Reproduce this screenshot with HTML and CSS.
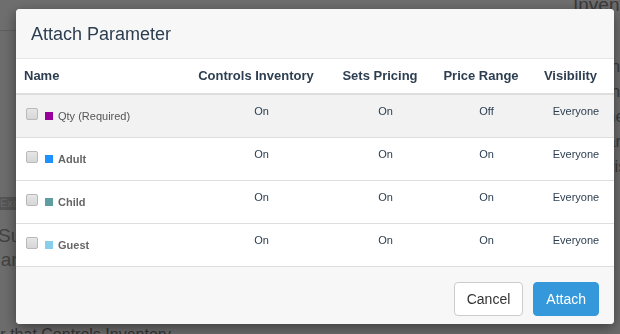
FILE: index.html
```html
<!DOCTYPE html>
<html lang="en">
<head>
<meta charset="utf-8">
<title>Attach Parameter</title>
<link rel="stylesheet" href="styles.css">
</head>
<body>
<div class="page">
  <main class="page-main">
    <div class="topbar"></div>
    <div class="content">
      <span class="badge">Example</span>
      <p class="lead">Sustainable tours</p>
      <p class="lead2">Parameters</p>
      <p class="note">Parameter that Controls Inventory.</p>
    </div>
  </main>
  <aside class="page-side">
    <h3 class="side-title">Inventory</h3>
    <p class="side-text">Inventory is controlled by the parameter selected here. Other parameters are tied to pricing and visibility for everyone.</p>
  </aside>
</div>

<div class="backdrop"></div>

<div class="modal-wrap">
  <div class="modal">
    <div class="modal-header">
      <h4 class="modal-title">Attach Parameter</h4>
    </div>
    <table class="ptable">
      <colgroup>
        <col class="c-name">
        <col class="c-inv">
        <col class="c-pri">
        <col class="c-rng">
        <col class="c-vis">
      </colgroup>
      <thead>
        <tr>
          <th class="th-name">Name</th>
          <th>Controls Inventory</th>
          <th>Sets Pricing</th>
          <th>Price Range</th>
          <th>Visibility</th>
        </tr>
      </thead>
      <tbody>
        <tr class="striped">
          <td class="name"><span class="cell-name"><span class="check"></span><span class="swatch sw-qty"></span><span class="label-req">Qty (Required)</span></span></td>
          <td class="val">On</td>
          <td class="val">On</td>
          <td class="val">Off</td>
          <td class="val">Everyone</td>
        </tr>
        <tr>
          <td class="name"><span class="cell-name"><span class="check"></span><span class="swatch sw-adult"></span><span class="label">Adult</span></span></td>
          <td class="val">On</td>
          <td class="val">On</td>
          <td class="val">On</td>
          <td class="val">Everyone</td>
        </tr>
        <tr>
          <td class="name"><span class="cell-name"><span class="check"></span><span class="swatch sw-child"></span><span class="label">Child</span></span></td>
          <td class="val">On</td>
          <td class="val">On</td>
          <td class="val">On</td>
          <td class="val">Everyone</td>
        </tr>
        <tr>
          <td class="name"><span class="cell-name"><span class="check"></span><span class="swatch sw-guest"></span><span class="label">Guest</span></span></td>
          <td class="val">On</td>
          <td class="val">On</td>
          <td class="val">On</td>
          <td class="val">Everyone</td>
        </tr>
      </tbody>
    </table>
    <div class="modal-footer">
      <button class="btn btn-default" type="button">Cancel</button>
      <button class="btn btn-primary" type="button">Attach</button>
    </div>
  </div>
</div>
</body>
</html>
```

FILE: styles.css
```css
* { box-sizing: border-box; }

html, body {
  margin: 0;
  padding: 0;
  width: 620px;
  height: 334px;
  overflow: hidden;
}

body {
  font-family: "Liberation Sans", Arial, sans-serif;
  background: #fbfbfb;
  color: #333;
}

/* background page */
.page {
  display: grid;
  grid-template-columns: 573px 1fr;
  height: 334px;
}

.topbar {
  height: 31px;
  background: #ffffff;
  border-bottom: 1px solid #dcdcdc;
}

.content {
  padding-top: 162px;
}

.badge {
  display: inline-block;
  background: #c4c4c4;
  color: #eeeeee;
  font-size: 11px;
  line-height: 13px;
  padding: 0 3px;
  margin-left: -3px;
}

.lead {
  margin: 14px 0 0 -2px;
  font-size: 19px;
  line-height: 22px;
  color: #9a9a9a;
}

.lead2 {
  margin: 2px 0 0 -12px;
  font-size: 19px;
  line-height: 22px;
  color: #9a9a9a;
}

.note {
  margin: 55px 0 0 -69px;
  font-size: 16px;
  line-height: 18px;
  color: #7a7a7a;
  white-space: nowrap;
}

.page-side {
  padding-top: 0;
}

.side-title {
  margin: -6px 0 0 0;
  font-size: 19px;
  font-weight: normal;
  line-height: 22px;
  color: #888;
}

.side-text {
  margin: 38px 0 0 33px;
  font-size: 17px;
  line-height: 25px;
  color: #8a8a8a;
  width: 200px;
}

/* overlay */
.backdrop {
  position: fixed;
  inset: 0;
  background: rgba(0, 0, 0, 0.57);
}

.modal-wrap {
  position: fixed;
  inset: 0;
  padding: 9px 0 0 16px;
}

.modal {
  width: 598px;
  background: #fff;
  border-radius: 4px;
  box-shadow: 0 4px 14px rgba(0, 0, 0, 0.45);
  overflow: hidden;
}

.modal-header {
  height: 50px;
  background: #f7f7f7;
  border-bottom: 1px solid #e6e6e6;
  display: flex;
  align-items: center;
  padding: 0 15px;
}

.modal-title {
  margin: 0;
  font-size: 18px;
  font-weight: normal;
  color: #2c3e50;
  line-height: 20px;
}

/* table */
.ptable {
  width: 598px;
  border-collapse: collapse;
  table-layout: fixed;
}

.c-name { width: 171px; }
.c-inv { width: 138px; }
.c-pri { width: 110px; }
.c-rng { width: 92px; }
.c-vis { width: 87px; }

.ptable th {
  font-size: 13px;
  font-weight: bold;
  color: #2c3e50;
  line-height: 18px;
  padding: 8px;
  text-align: center;
  border-bottom: 2px solid #dedede;
  white-space: nowrap;
}

.ptable th.th-name {
  text-align: left;
}

.ptable td {
  height: 43px;
  vertical-align: top;
  border-bottom: 1px solid #dedede;
  font-size: 11px;
  line-height: 16px;
}

.ptable tr.striped td {
  background: #f2f2f2;
}

.ptable td.val {
  text-align: center;
  padding: 8px 8px 0 19px;
  color: #2c3e50;
  white-space: nowrap;
}

.ptable td.name {
  padding: 13px 8px 0 8px;
}

.cell-name {
  display: flex;
  align-items: flex-start;
}

.check {
  width: 12px;
  height: 12px;
  margin: 0 7px 0 2px;
  border: 1px solid #b9b9b9;
  border-radius: 2px;
  background: linear-gradient(#e6e6e6, #d6d6d6);
  flex: none;
}

.swatch {
  width: 8px;
  height: 8px;
  margin: 4px 5px 0 0;
  flex: none;
}

.sw-qty { background: #990099; }
.sw-adult { background: #1e90ff; }
.sw-child { background: #5f9ea0; }
.sw-guest { background: #87ceeb; }

.label-req {
  color: #555;
}

.label {
  color: #666;
  font-weight: bold;
}

/* footer */
.modal-footer {
  background: #f7f7f7;
  display: flex;
  justify-content: flex-end;
  gap: 10px;
  padding: 15px 15px 8px 15px;
}

.btn {
  font-family: "Liberation Sans", Arial, sans-serif;
  font-size: 14px;
  line-height: 20px;
  padding: 6px 12px;
  border-radius: 4px;
  border: 1px solid transparent;
  cursor: pointer;
}

.btn-default {
  background: #fff;
  border-color: #cccccc;
  color: #333;
}

.btn-primary {
  background: #3498db;
  border-color: #3498db;
  color: #fff;
}
```
